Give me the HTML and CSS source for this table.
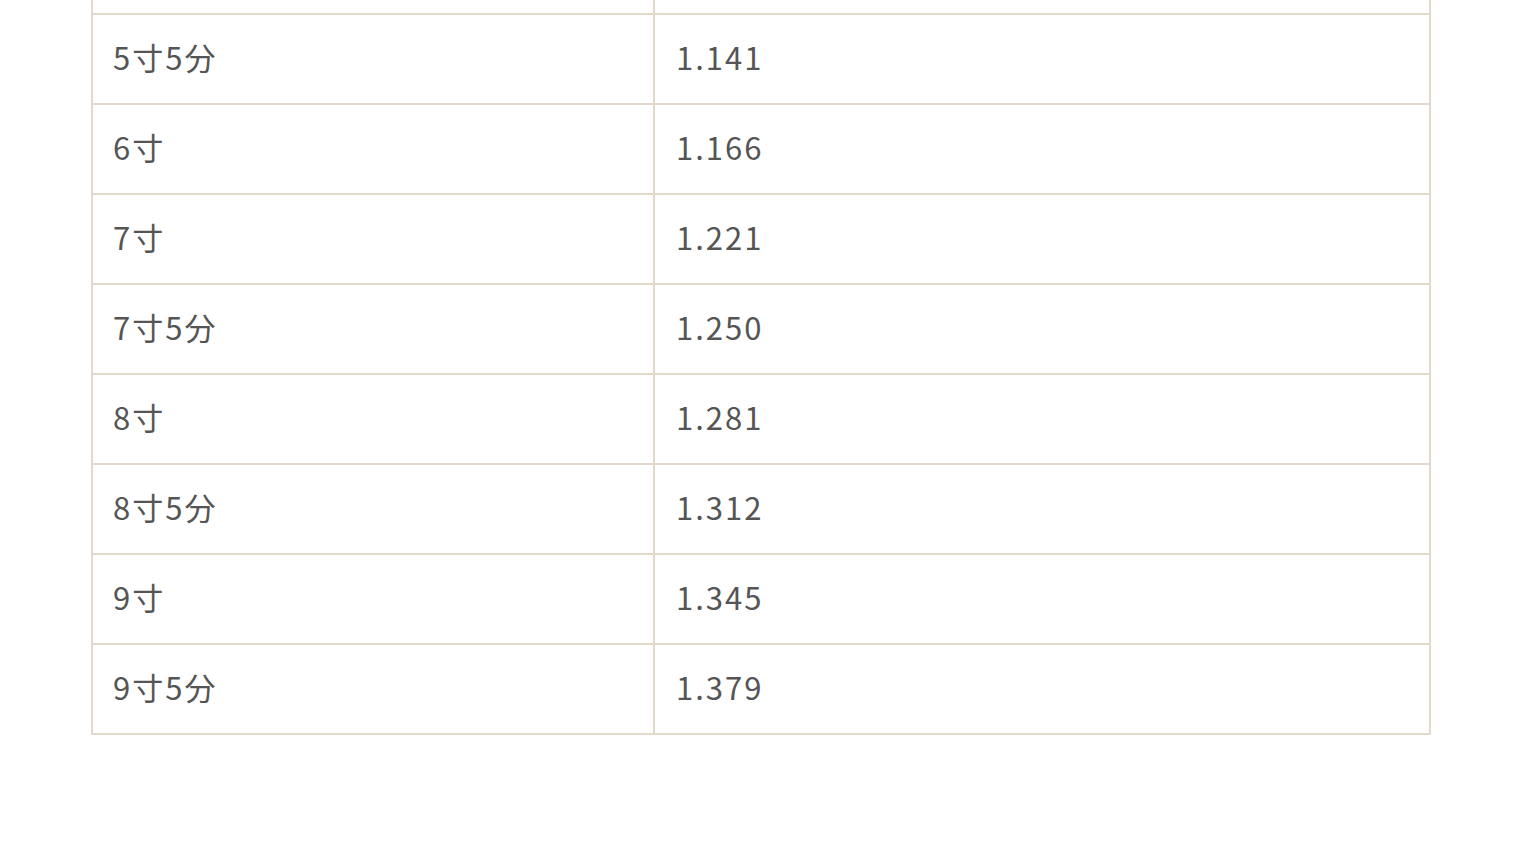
FILE: index.html
```html
<!DOCTYPE html>
<html lang="ja">
<head>
<meta charset="utf-8">
<title>勾配係数</title>
<link rel="stylesheet" href="styles.css">
</head>
<body>
<main class="page">
  <table class="ratio-table">
    <tbody>
      <tr><td class="c-slope">5寸</td><td class="c-value">1.118</td></tr>
      <tr><td class="c-slope">5寸5分</td><td class="c-value">1.141</td></tr>
      <tr><td class="c-slope">6寸</td><td class="c-value">1.166</td></tr>
      <tr><td class="c-slope">7寸</td><td class="c-value">1.221</td></tr>
      <tr><td class="c-slope">7寸5分</td><td class="c-value">1.250</td></tr>
      <tr><td class="c-slope">8寸</td><td class="c-value">1.281</td></tr>
      <tr><td class="c-slope">8寸5分</td><td class="c-value">1.312</td></tr>
      <tr><td class="c-slope">9寸</td><td class="c-value">1.345</td></tr>
      <tr><td class="c-slope">9寸5分</td><td class="c-value">1.379</td></tr>
    </tbody>
  </table>
</main>
</body>
</html>
```
FILE: styles.css
```css
html, body {
  margin: 0;
  padding: 0;
  background: #ffffff;
}
body {
  font-family: "Noto Sans CJK JP", "Noto Sans", sans-serif;
  color: #555555;
  overflow: hidden;
}
.page {
  padding-left: 91px;
  margin-top: -77px;
}
.ratio-table {
  width: 1340px;
  border-collapse: separate;
  border-spacing: 0;
  border-top: 2px solid #e3d9cb;
  border-left: 2px solid #e3d9cb;
  table-layout: fixed;
}
.ratio-table td {
  height: 90px;
  box-sizing: border-box;
  padding: 0 20px 5px 20px;
  border-right: 2px solid #e3d9cb;
  border-bottom: 2px solid #e3d9cb;
  font-size: 31px;
  line-height: 1;
  letter-spacing: 2px;
  vertical-align: middle;
}
.ratio-table td.c-slope {
  width: 562px;
}
.ratio-table td.c-value {
  padding-left: 21px;
}
```
